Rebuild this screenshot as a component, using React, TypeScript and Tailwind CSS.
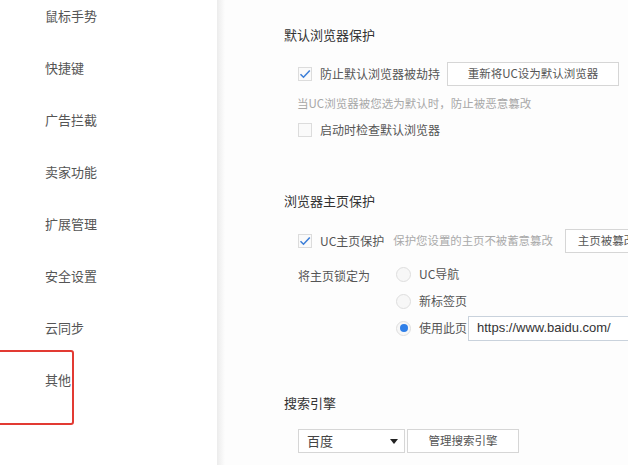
const NAV = ["鼠标手势", "快捷键", "广告拦截", "卖家功能", "扩展管理", "安全设置", "云同步", "其他"];

const FONT = "font-['Noto_Sans_CJK_SC',sans-serif]";

function Checkbox({ checked }: { checked?: boolean }) {
  return (
    <span className="w-[14px] h-[14px] border border-[#dcdcdc] bg-[#fafafa] flex items-center justify-center shrink-0">
      {checked && (
        <svg width="12" height="10" viewBox="0 0 12 10">
          <path d="M1.5 5.2 L4.5 8.2 L10.8 1.5" fill="none" stroke="#3d7fd8" strokeWidth="1.6" />
        </svg>
      )}
    </span>
  );
}

function Radio({ checked }: { checked?: boolean }) {
  return (
    <span className="w-[15px] h-[15px] rounded-full border border-[#dedede] bg-[#f7f7f7] flex items-center justify-center shrink-0">
      {checked && <span className="w-[8px] h-[8px] rounded-full bg-[#2f7fe8]" />}
    </span>
  );
}

function Btn({ children, className = "" }: { children: React.ReactNode; className?: string }) {
  return (
    <div className={`h-[24px] border border-[#d6d6d6] bg-white flex items-center justify-center text-[11.5px] text-[#555] ${className}`}>
      {children}
    </div>
  );
}

export default function App() {
  return (
    <div className={`w-[628px] h-[465px] overflow-hidden flex bg-white ${FONT}`}>
      <aside className="w-[217px] shrink-0 relative bg-white">
        <div className="-mt-[10px]">
          {NAV.map((n) => (
            <div key={n} className="h-[52px] flex items-center pl-[45px] text-[13px] text-[#555]">
              {n}
            </div>
          ))}
        </div>
        <div className="absolute left-[-10px] top-[350px] w-[84px] h-[75px] border-2 border-[#e23a33] rounded-[3px]" />
      </aside>
      <div className="w-[8px] shrink-0 bg-gradient-to-r from-[#ececec] to-[#fdfdfd]" />
      <main className="flex-1 min-w-0 bg-[#fdfdfd] pl-[59px] text-[#444] whitespace-nowrap">
        <div className="mt-[26px] h-[18px] leading-[18px] text-[13px] text-[#333]">默认浏览器保护</div>
        <div className="mt-[18px] pl-[14px] flex items-center h-[24px]">
          <Checkbox checked />
          <span className="ml-[8px] text-[12px] text-[#555]">防止默认浏览器被劫持</span>
          <Btn className="ml-[7px] w-[172px] shrink-0">重新将UC设为默认浏览器</Btn>
        </div>
        <div className="mt-[9px] pl-[13px] h-[16px] leading-[16px] text-[11.5px] text-[#a8a8a8]">
          当UC浏览器被您选为默认时，防止被恶意篡改
        </div>
        <div className="mt-[10px] pl-[14px] flex items-center h-[18px]">
          <Checkbox />
          <span className="ml-[8px] text-[12px] text-[#555]">启动时检查默认浏览器</span>
        </div>

        <div className="mt-[53px] h-[18px] leading-[18px] text-[13px] text-[#333]">浏览器主页保护</div>
        <div className="mt-[19px] pl-[14px] flex items-center h-[24px]">
          <Checkbox checked />
          <span className="ml-[8px] text-[12px] text-[#555] shrink-0">UC主页保护</span>
          <span className="ml-[9px] text-[11.4px] text-[#aaa] shrink-0">保护您设置的主页不被蓄意篡改</span>
          <Btn className="ml-[12px] w-[90px] shrink-0 justify-start pl-[12px] overflow-hidden">主页被篡改</Btn>
        </div>
        <div className="mt-[8px] pl-[14px] flex">
          <div className="w-[98px] shrink-0 pt-[6px] text-[12px] text-[#555]">将主页锁定为</div>
          <div className="flex flex-col shrink-0">
            <div className="h-[26px] flex items-center">
              <Radio />
              <span className="ml-[8px] text-[12px] text-[#555]">UC导航</span>
            </div>
            <div className="mt-[1px] h-[26px] flex items-center">
              <Radio />
              <span className="ml-[8px] text-[12px] text-[#555]">新标签页</span>
            </div>
            <div className="mt-[1px] h-[26px] flex items-center">
              <Radio checked />
              <span className="ml-[8px] text-[12px] text-[#555]">使用此页</span>
              <div className="ml-[1px] w-[200px] shrink-0 h-[25px] border border-[#c9d2dc] bg-white flex items-center pl-[8px] text-[13px] text-[#333] font-['Liberation_Sans',sans-serif]">
                https://www.baidu.com/
              </div>
            </div>
          </div>
        </div>

        <div className="mt-[53px] h-[18px] leading-[18px] text-[13px] text-[#333]">搜索引擎</div>
        <div className="mt-[17px] pl-[14px] flex items-center">
          <div className="w-[107px] h-[24px] border border-[#d6d6d6] bg-white flex items-center pl-[8px] pr-[6px] text-[13px] text-[#444]">
            <span className="flex-1">百度</span>
            <svg width="8" height="5" viewBox="0 0 8 5">
              <path d="M0 0 H8 L4 5 Z" fill="#222" />
            </svg>
          </div>
          <Btn className="ml-[2px] w-[112px]">管理搜索引擎</Btn>
        </div>
      </main>
    </div>
  );
}
